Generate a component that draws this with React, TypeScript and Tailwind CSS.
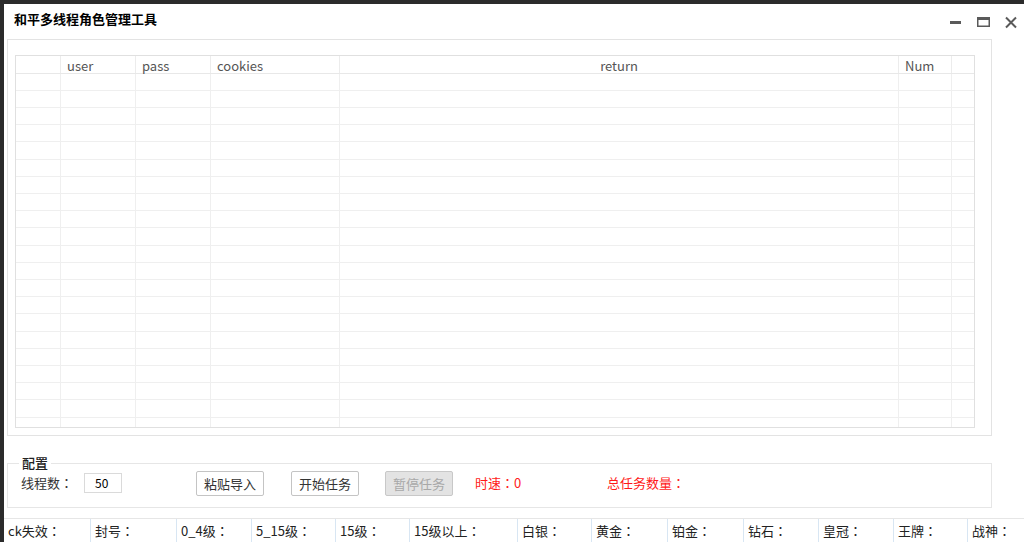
import React from "react";

const font = { fontFamily: '"Noto Sans CJK SC", "Microsoft YaHei", sans-serif' };

const colWidths = ["w-[45px]", "w-[75px]", "w-[75px]", "w-[129px]", "w-[559px]", "w-[53px]", "w-[23px]"];
const headers = ["", "user", "pass", "cookies", "return", "Num", ""];
const rowHeights = Array.from({ length: 22 }, (_, i) => ((i + 1) % 5 === 0 ? "h-[18px]" : "h-[17px]"));

const statusItems: [string, string][] = [
  ["ck失效", "w-[86px]"],
  ["封号", "w-[86px]"],
  ["0_4级", "w-[75px]"],
  ["5_15级", "w-[84px]"],
  ["15级", "w-[74px]"],
  ["15级以上", "w-[108px]"],
  ["白银", "w-[74px]"],
  ["黄金", "w-[76px]"],
  ["铂金", "w-[76px]"],
  ["钻石", "w-[75px]"],
  ["皇冠", "w-[75px]"],
  ["王牌", "w-[74px]"],
  ["战神", "flex-1"],
];

function Colon() {
  return <span style={{ fontFamily: '"Noto Sans CJK JP", sans-serif' }}>：</span>;
}

export default function App() {
  return (
    <div className="w-[1024px] h-[542px] bg-[#2b2b2b] pt-[4px] pl-[4px] overflow-hidden" style={font}>
      <div className="w-full h-full bg-white flex flex-col">
        {/* Title bar */}
        <div className="h-[35px] flex items-start">
          <div className="pl-[10px] pt-[6px] text-[13px] font-bold text-black leading-[18px]">和平多线程角色管理工具</div>
          <div className="flex-1" />
          <div className="flex items-start pt-[12px]">
            <svg width="14" height="14" viewBox="0 0 14 14" className="mr-[13px]">
              <rect x="1" y="5" width="11" height="3" fill="#5a5a5a" />
            </svg>
            <svg width="16" height="14" viewBox="0 0 16 14" className="mr-[12px]">
              <rect x="1.75" y="1.75" width="11.5" height="8.5" fill="none" stroke="#5a5a5a" strokeWidth="1.5" />
              <rect x="1" y="1" width="13" height="3" fill="#5a5a5a" />
            </svg>
            <svg width="14" height="14" viewBox="0 0 14 14" className="mr-[6px]">
              <path d="M2 1.5 L12 11.5 M12 1.5 L2 11.5" stroke="#5a5a5a" strokeWidth="2" />
            </svg>
          </div>
        </div>

        {/* Table panel */}
        <div className="ml-[3px] w-[985px] h-[398px] border border-[#e3e3e3] pl-[7px] pt-[15px]">
          <div className="w-[960px] h-[373px] border border-[#e0e0e0] overflow-hidden">
            <div className="flex h-[18px] border-b border-[#e8e8e8]">
              {headers.map((h, i) => (
                <div
                  key={i}
                  className={`${colWidths[i]} shrink-0 h-full border-r border-[#ececec] text-[13px] leading-[17px] pt-[1px] text-[#555] ${
                    i === 4 ? "text-center" : "pl-[6px]"
                  }`}
                >
                  {h}
                </div>
              ))}
            </div>
            {rowHeights.map((rh, r) => (
              <div key={r} className={`flex ${rh} border-b border-[#efefef]`}>
                {colWidths.map((w, i) => (
                  <div key={i} className={`${w} shrink-0 h-full border-r border-[#efefef]`} />
                ))}
              </div>
            ))}
          </div>
        </div>

        {/* Config group */}
        <div className="relative ml-[3px] mt-[27px] w-[985px] h-[45px] border border-[#e6e6e6] flex items-center pl-[13px] pb-[5px]">
          <span className="absolute left-[11px] top-[-10px] bg-white px-[3px] text-[13px] leading-[18px] text-[#222] font-medium">配置</span>
          <span className="w-[63px] text-[13px] text-[#333] leading-[18px]">
            线程数<Colon />
          </span>
          <div className="w-[38px] h-[20px] border border-[#dadada] text-[12px] leading-[18px] text-black pl-[10px]">50</div>
          <button className="ml-[74px] w-[68px] h-[25px] border border-[#c4c4c4] rounded-[2px] bg-white text-[13px] text-[#333] leading-[23px]">粘贴导入</button>
          <button className="ml-[27px] w-[68px] h-[25px] border border-[#c4c4c4] rounded-[2px] bg-white text-[13px] text-[#333] leading-[23px]">开始任务</button>
          <button className="ml-[26px] w-[68px] h-[25px] border border-[#c8c8c8] rounded-[2px] bg-[#e3e3e3] text-[13px] text-[#a8a8a8] leading-[23px]">暂停任务</button>
          <span className="ml-[22px] w-[132px] text-[13px] text-[#ff1a1a] leading-[18px]">
            时速<Colon />0
          </span>
          <span className="text-[13px] text-[#ff1a1a] leading-[18px]">
            总任务数量<Colon />
          </span>
        </div>

        {/* Status bar */}
        <div className="mt-[10px] flex-1 border-t border-[#e6e6e6] flex">
          {statusItems.map(([t, w], i) => (
            <div
              key={i}
              className={`${w} shrink-0 h-full pl-[4px] text-[13px] leading-[23px] text-[#222] ${
                i === 0 ? "" : "border-l border-[#d8e6f3]"
              }`}
            >
              {t}
              <Colon />
            </div>
          ))}
        </div>
      </div>
    </div>
  );
}
